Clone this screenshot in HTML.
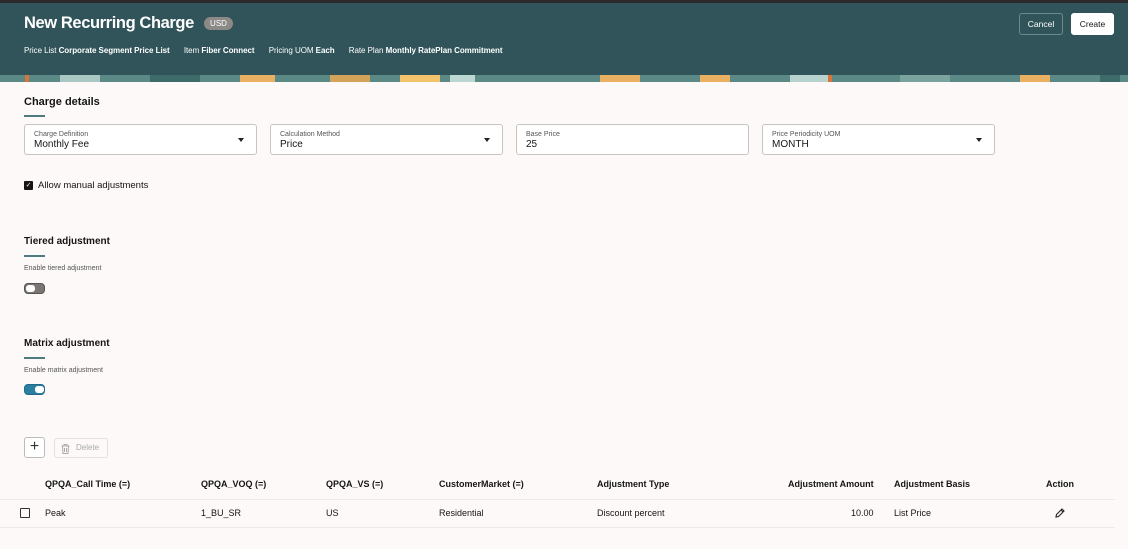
<!DOCTYPE html>
<html><head><meta charset="utf-8"><style>
*{box-sizing:border-box;margin:0;padding:0}
body{width:1128px;height:549px;overflow:hidden;background:#fcf9f8;font-family:"Liberation Sans",sans-serif;color:#161513;position:relative}
.top{position:absolute;left:0;top:0;width:1128px;height:3px;background:#2a2a2a}
.hdr{position:absolute;left:0;top:3px;width:1128px;height:72px;background:#30545a}
.band{position:absolute;left:0;top:75px;width:1128px;height:7px;background:#5b8a86;overflow:hidden}
.band i{position:absolute;top:0;height:7px}
.abs{position:absolute}
h1{position:absolute;left:24px;top:14px;font-size:16.5px;letter-spacing:-0.4px;color:#fff;font-weight:bold}
.usd{position:absolute;left:204px;top:17px;width:29px;height:13px;border-radius:7px;background:#8c8a86;color:#fff;font-size:8px;text-align:center;line-height:13px}
.meta{position:absolute;left:24px;top:46px;font-size:8px;letter-spacing:-0.05px;color:#fff;white-space:nowrap}
.meta b{margin-right:12px}
.btn{position:absolute;top:13px;height:22px;border-radius:3px;font-size:8.5px;text-align:center;line-height:20px}
h2{position:absolute;font-size:11px;font-weight:bold;left:24px}
.ul{position:absolute;left:24px;width:21px;height:2px;background:#4d7b80}
.fld{position:absolute;top:124px;width:233px;height:31px;border:1px solid #c8c4c0;border-radius:3px;background:#fff}
.fld .l{position:absolute;left:9px;top:6px;font-size:7px;color:#555}
.fld .v{position:absolute;left:9px;top:14px;font-size:10px}
.fld .a{position:absolute;right:12px;top:13px;width:0;height:0;border-left:3.5px solid transparent;border-right:3.5px solid transparent;border-top:4px solid #222}
.sm{position:absolute;left:24px;font-size:7px;color:#555}
.tg{position:absolute;left:24px;width:21px;height:11px;border-radius:4px}
.tg i{position:absolute;top:2px;width:9px;height:7px;border-radius:3px;background:#fff}
.th{position:absolute;top:479px;font-size:9px;font-weight:bold}
.td{position:absolute;top:508px;font-size:9px}
</style></head><body>
<div class="top"></div>
<div class="hdr"></div>
<div class="band">
<i style="left:25px;width:4px;background:#d9743a"></i>
<i style="left:60px;width:40px;background:#a9c7c3"></i>
<i style="left:150px;width:50px;background:#3f6a6a"></i>
<i style="left:240px;width:35px;background:#e8b060"></i>
<i style="left:330px;width:40px;background:#d4a35a"></i>
<i style="left:400px;width:40px;background:#f2c36a"></i>
<i style="left:450px;width:25px;background:#bcd6d2"></i>
<i style="left:600px;width:40px;background:#e8b060"></i>
<i style="left:700px;width:30px;background:#e8b060"></i>
<i style="left:790px;width:40px;background:#b8d2ce"></i>
<i style="left:828px;width:4px;background:#d9743a"></i>
<i style="left:900px;width:50px;background:#7aa39e"></i>
<i style="left:1020px;width:30px;background:#e8b060"></i>
<i style="left:1100px;width:20px;background:#3f6a6a"></i>
</div>
<h1>New Recurring Charge</h1>
<div class="usd">USD</div>
<div class="meta">Price List <b>Corporate Segment Price List</b> Item <b>Fiber Connect</b> Pricing UOM <b>Each</b> Rate Plan <b>Monthly RatePlan Commitment</b></div>
<div class="btn" style="left:1019px;width:44px;border:1px solid #6b8a8c;color:#fff">Cancel</div>
<div class="btn" style="left:1071px;width:43px;background:#fff;color:#161513;border:1px solid #fff">Create</div>

<h2 style="top:96px">Charge details</h2><div class="ul" style="top:115px"></div>
<div class="fld" style="left:24px"><div class="l">Charge Definition</div><div class="v">Monthly Fee</div><div class="a"></div></div>
<div class="fld" style="left:270px"><div class="l">Calculation Method</div><div class="v">Price</div><div class="a"></div></div>
<div class="fld" style="left:516px"><div class="l">Base Price</div><div class="v">25</div></div>
<div class="fld" style="left:762px"><div class="l">Price Periodicity UOM</div><div class="v">MONTH</div><div class="a"></div></div>

<div class="abs" style="left:24px;top:181px;width:9px;height:9px;background:#161513;border-radius:1px;color:#fff;font-size:7px;line-height:9px;text-align:center">✓</div>
<div class="abs" style="left:38px;top:180px;font-size:9.5px">Allow manual adjustments</div>

<h2 style="top:236px;font-size:10px">Tiered adjustment</h2><div class="ul" style="top:255px"></div>
<div class="sm" style="top:265px">Enable tiered adjustment</div>
<div class="tg" style="top:283px;background:#7a7773;border:1px solid #555"><i style="left:1px;top:1px"></i></div>

<h2 style="top:338px;font-size:10px">Matrix adjustment</h2><div class="ul" style="top:357px"></div>
<div class="sm" style="top:367px">Enable matrix adjustment</div>
<div class="tg" style="top:384px;background:#2a7fa0;border:1px solid #1e6a88"><i style="left:10px;top:1px"></i></div>

<div class="abs" style="left:24px;top:437px;width:21px;height:21px;border:1px solid #bbb;border-radius:3px;background:#fff;text-align:center;line-height:18px;font-size:16px;color:#333">+</div>
<div class="abs" style="left:54px;top:438px;width:54px;height:20px;border:1px solid #e2dfdc;border-radius:3px;font-size:8px;color:#aaa;line-height:18px;padding-left:21px">Delete
<svg style="position:absolute;left:6px;top:5px" width="9" height="10" viewBox="0 0 9 10" fill="none" stroke="#aaa" stroke-width="1"><path d="M0.5 2h8M3 2V.5h3V2M1.5 2l.5 7.5h5l.5-7.5M3.5 4v4M5.5 4v4"/></svg></div>

<div class="th" style="left:45px">QPQA_Call Time (=)</div>
<div class="th" style="left:201px">QPQA_VOQ (=)</div>
<div class="th" style="left:326px">QPQA_VS (=)</div>
<div class="th" style="left:439px">CustomerMarket (=)</div>
<div class="th" style="left:597px">Adjustment Type</div>
<div class="th" style="left:788px">Adjustment Amount</div>
<div class="th" style="left:894px">Adjustment Basis</div>
<div class="th" style="left:1046px">Action</div>
<div class="abs" style="left:0;top:499px;width:1115px;height:1px;background:#ece9e6"></div>
<div class="abs" style="left:0;top:527px;width:1115px;height:1px;background:#ece9e6"></div>
<div class="abs" style="left:20px;top:508px;width:10px;height:10px;border:1px solid #333;border-radius:1px"></div>
<div class="td" style="left:45px">Peak</div>
<div class="td" style="left:201px">1_BU_SR</div>
<div class="td" style="left:326px">US</div>
<div class="td" style="left:439px">Residential</div>
<div class="td" style="left:597px">Discount percent</div>
<div class="td" style="left:851px">10.00</div>
<div class="td" style="left:894px">List Price</div>
<svg class="abs" style="left:1055px;top:508px" width="10" height="10" viewBox="0 0 10 10" fill="none" stroke="#222" stroke-width="1.1"><path d="M1 9l.5-2.5L7 1l2 2-5.5 5.5z M6 2l2 2"/></svg>
</body></html>
